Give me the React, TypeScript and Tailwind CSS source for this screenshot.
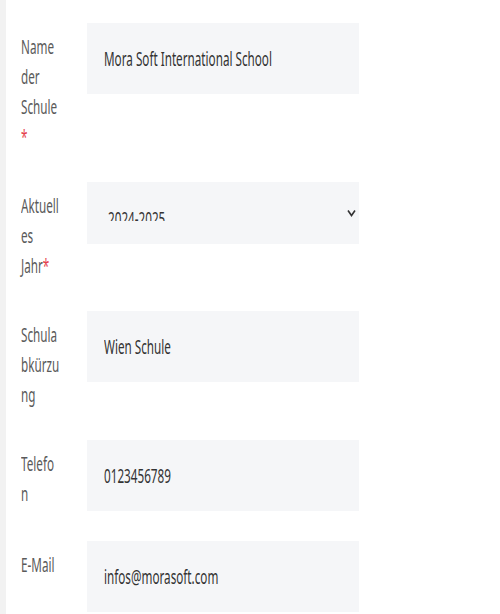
import React from "react";

const font = { fontFamily: '"Noto Sans", "Open Sans", sans-serif' };

// the reference text is very narrow, so every text is squeezed sideways
function Narrow({ children, className = "" }: { children: React.ReactNode; className?: string }) {
  return (
    <span className={`inline-block whitespace-nowrap origin-left scale-x-[0.585] ${className}`}>{children}</span>
  );
}

function Label({ lines }: { lines: React.ReactNode[] }) {
  return (
    <div className="w-[66px] shrink-0 pt-[9px]">
      {lines.map((l, i) => (
        <div key={i} className="h-[30px] text-[20px] leading-[30px] text-[#5a5a5a]">
          <Narrow>{l}</Narrow>
        </div>
      ))}
    </div>
  );
}

function TextRow({ lines, value }: { lines: React.ReactNode[]; value: string }) {
  return (
    <div className="flex items-start mb-[30px]">
      <Label lines={lines} />
      <div className="w-[272px] h-[71px] shrink-0 bg-[#f5f6f8] flex items-center pl-[17px] text-[20px] leading-[30px] text-[#333]">
        <Narrow>{value}</Narrow>
      </div>
    </div>
  );
}

const star = <span className="text-[#e5414c]">*</span>;

export default function App() {
  return (
    <div className="min-h-[614px] w-[500px] bg-white flex overflow-hidden" style={font}>
      <div className="w-[6px] shrink-0 bg-[#f2f2f2]" />
      <div className="pl-[15px] pt-[23px]">
        <TextRow lines={["Name", "der", "Schule", star]} value="Mora Soft International School" />

        <div className="flex items-start mb-[30px]">
          <Label lines={["Aktuell", "es", <>Jahr{star}</>]} />
          <div className="w-[272px] h-[62px] shrink-0 bg-[#f5f6f8] relative">
            <div className="absolute left-[21px] top-[30px] h-[9px] overflow-hidden">
              <div className="-mt-[3px] text-[20px] leading-[20px] text-[#333]">
                <Narrow>2024-2025</Narrow>
              </div>
            </div>
            <svg
              className="absolute right-[3px] top-[27px]"
              width="9"
              height="8"
              viewBox="0 0 9 8"
              fill="none"
              stroke="#333"
              strokeWidth="1.6"
            >
              <path d="M1 1.5 L4.5 6.5 L8 1.5" />
            </svg>
          </div>
        </div>

        <TextRow lines={["Schula", "bkürzu", "ng"]} value="Wien Schule" />
        <TextRow lines={["Telefo", "n"]} value="0123456789" />
        <TextRow lines={["E-Mail"]} value="infos@morasoft.com" />
      </div>
    </div>
  );
}
